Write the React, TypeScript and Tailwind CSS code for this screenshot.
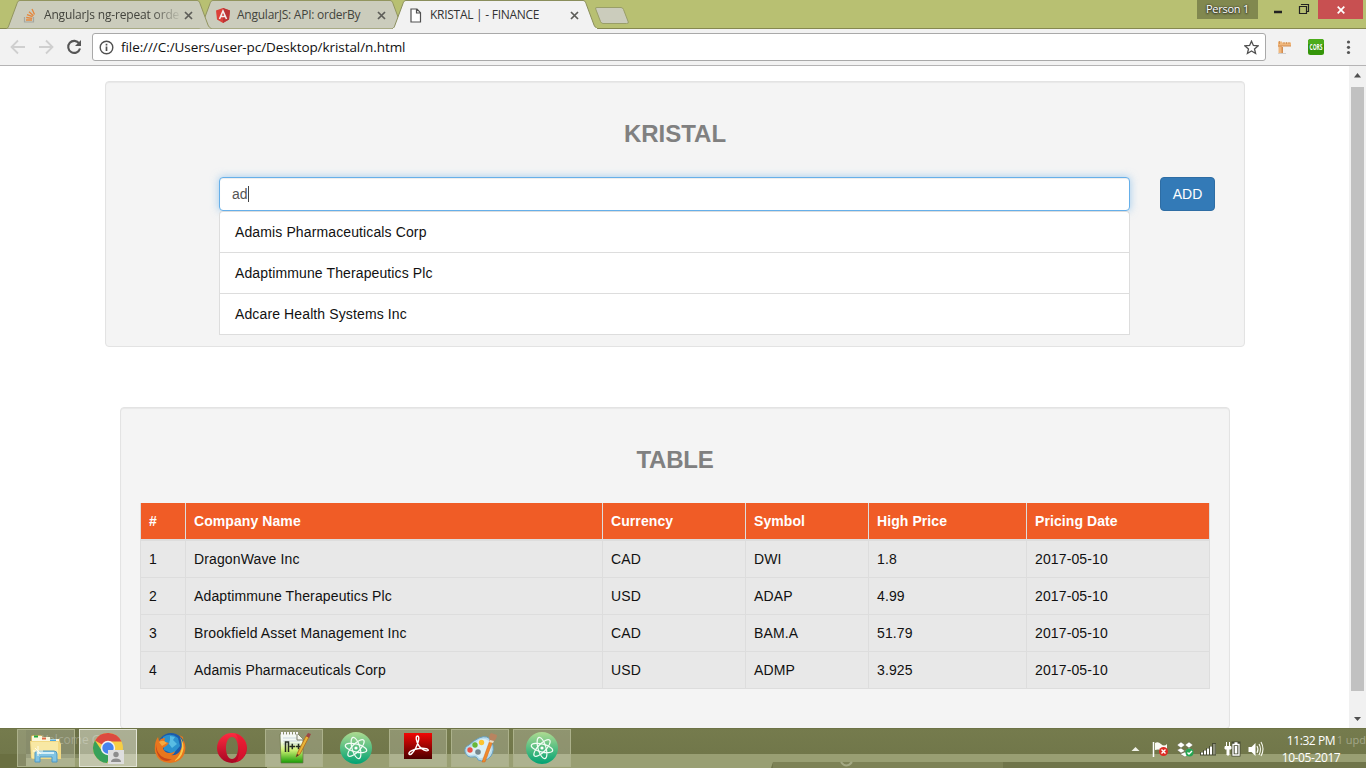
import type { ReactNode } from 'react';

const companies = ['Adamis Pharmaceuticals Corp', 'Adaptimmune Therapeutics Plc', 'Adcare Health Systems Inc'];

const headers = ['#', 'Company Name', 'Currency', 'Symbol', 'High Price', 'Pricing Date'];

const rows = [
  ['1', 'DragonWave Inc', 'CAD', 'DWI', '1.8', '2017-05-10'],
  ['2', 'Adaptimmune Therapeutics Plc', 'USD', 'ADAP', '4.99', '2017-05-10'],
  ['3', 'Brookfield Asset Management Inc', 'CAD', 'BAM.A', '51.79', '2017-05-10'],
  ['4', 'Adamis Pharmaceuticals Corp', 'USD', 'ADMP', '3.925', '2017-05-10'],
];

function Close() {
  return (
    <svg width="9" height="9" viewBox="0 0 9 9" className="shrink-0">
      <path d="M1 1l7 7M8 1L1 8" stroke="#5d5d58" strokeWidth="1.7" />
    </svg>
  );
}

function Tab({ active, icon, title, className, textClass }: { active?: boolean; icon: ReactNode; title: string; className: string; textClass: string }) {
  return (
    <div className={`relative flex h-[29px] w-[206px] shrink-0 items-center ${className}`}>
      <svg width="206" height="29" className="absolute inset-0">
        <path
          d="M0.5 28.5C2 28 2.5 26.500 3 25L11 3.500C11.600 1.500 12.500 0.500 14 0.500H191C192.500 0.500 193.400 1.500 194 3.500L202 25C202.500 26.500 204 28 205.500 28.5"
          fill={active ? '#f2f2f2' : '#cbccbc'}
          stroke={active ? '#8a8e5c' : '#92955f'}
        />
        {active && <path d="M1 28.500H205" stroke="#f2f2f2" />}
      </svg>
      <div className="relative flex w-full items-center pl-[17px] pt-px">
        <div className="w-[21px] shrink-0">{icon}</div>
        <div className={`w-[137px] whitespace-nowrap text-[12px] leading-4 ${textClass}`}>{title}</div>
        <div className="ml-[3px]">
          <Close />
        </div>
      </div>
    </div>
  );
}

function TabStrip() {
  return (
    <div className="flex h-[29px] border-b border-[#85884f] bg-[#b8c072]">
      <div className="flex w-[598px] shrink-0 pl-[6px]">
        <Tab
          className="z-10"
          textClass="text-[#43443d] tracking-[-0.17px] [mask-image:linear-gradient(to_right,black_108px,transparent_138px)]"
          title="AngularJs ng-repeat orde"
          icon={
            <svg width="14" height="15" viewBox="0 0 14 15">
              <path d="M1.500 9v5h9V9" fill="none" stroke="#a5a6a0" strokeWidth="1.200" />
              <path d="M3 12h6M3.200 9.500l6 .8M4 6.600l5.600 2M6 3.800l4.500 4M9 1l2.500 5.500" stroke="#e5863b" strokeWidth="1.300" />
            </svg>
          }
        />
        <Tab
          className="-ml-[13px]"
          textClass="text-[#43443d] tracking-[-0.24px]"
          title="AngularJS: API: orderBy"
          icon={
            <svg width="14" height="15" viewBox="0 0 14 15">
              <path d="M7 0l7 2.500-1 9L7 15l-6-3.500L0 2.500z" fill="#dc4038" />
              <path d="M7 0l7 2.500-1 9L7 15z" fill="#bb3436" />
              <path d="M3.500 11L7 3l3.500 8M4.800 8.500h4.400" fill="none" stroke="#f5eeee" strokeWidth="1.600" />
            </svg>
          }
        />
        <Tab
          active
          className="-ml-[13px] z-20"
          textClass="text-[#333] tracking-[-0.27px]"
          title="KRISTAL | - FINANCE"
          icon={
            <svg width="12" height="15" viewBox="0 0 12 15" className="ml-px">
              <path d="M1 1h6l3.500 3.700V14H1zM6.500 1v4h4" fill="#fff" stroke="#505050" strokeWidth="1.200" />
            </svg>
          }
        />
      </div>
      <svg width="36" height="28" className="-ml-[4px] shrink-0">
        <path d="M3 7.500Q1 7.500 1.700 9L6.500 21.500Q7.300 23.500 9 23.500H32.500Q35 23.500 34.300 22L29.500 9.500Q28.800 7.500 27 7.500Z" fill="#cbccbc" stroke="#999e68" />
      </svg>
      <div className="ml-auto mr-[3px] flex items-start">
        <div className="flex h-[19px] w-[61px] items-center justify-center bg-[#81884f] pb-px text-[11px] tracking-[-0.25px] text-white [text-shadow:0_0_2px_#222,0_1px_2px_#222]">
          Person 1
        </div>
        <svg width="60" height="19" fill="none">
          <path d="M16 12h8" stroke="#222" strokeWidth="2.500" />
          <path d="M41.500 6.500h7v7h-7zM43.500 5V4.500h7v7H49" stroke="#222" strokeWidth="1.200" />
        </svg>
        <div className="flex h-[19px] w-[45px] items-center justify-center bg-[#c85051]">
          <svg width="8" height="8" viewBox="0 0 8 8">
            <path d="M.7.7l6.600 6.600M7.300.7L.7 7.300" stroke="#fff" strokeWidth="1.700" />
          </svg>
        </div>
      </div>
    </div>
  );
}

function Toolbar() {
  return (
    <div className="flex h-[37px] items-start border-b border-[#b5b4b5] bg-[#f2f2f2] pt-[4px]">
      <svg width="92" height="28" fill="none" className="shrink-0">
        <path d="M25 14H12M18 7.500L11.500 14l6.500 6.500" stroke="#cfcfcf" strokeWidth="1.800" />
        <path d="M39 14h13M46 7.500l6.500 6.500-6.500 6.500" stroke="#cfcfcf" strokeWidth="1.800" />
        <path d="M79.200 10.500A6 6 0 1 0 80 15.500" stroke="#555" strokeWidth="2.100" />
        <path d="M81 7v6h-6z" fill="#555" />
      </svg>
      <div className="flex h-[28px] w-[1174px] items-center rounded-[3px] border border-[#a9a9a9] bg-white pl-[7px] pr-[6px]">
        <svg width="15" height="15" viewBox="0 0 15 15" fill="none" className="-translate-x-px">
          <circle cx="7.500" cy="7.500" r="6.300" stroke="#505050" strokeWidth="1.400" />
          <path d="M7.500 6.500v4.500M7.500 3.800v1.600" stroke="#505050" strokeWidth="1.700" />
        </svg>
        <span className="ml-[6px] text-[13.500px] leading-5 tracking-[-0.075px] text-[#111]">file:///C:/Users/user-pc/Desktop/kristal/n.html</span>
        <svg width="15" height="15" viewBox="0 0 15 15" className="ml-auto">
          <path d="M7.500 1.200l1.900 4.300 4.600.4-3.500 3 1.100 4.600-4.100-2.500-4.100 2.500 1.100-4.600-3.500-3 4.600-.4z" fill="none" stroke="#505050" strokeWidth="1.300" />
        </svg>
      </div>
      <svg width="100" height="28" className="shrink-0">
        <path d="M12 8.500h4v1h9v3.500h-9v7h-3.500v-6.500H12z" fill="#f0b77c" />
        <path d="M12 12.500h13v1H12zM15.500 13v7H17v-7z" fill="#d28c50" />
        <path d="M13.500 8v3M18 9v2M20.500 9v2M23 9v2" stroke="#c58448" strokeWidth=".7" />
        <path d="M12 20.500h8" stroke="#cfcfcf" />
        <rect x="42" y="6" width="16" height="16" rx="2.500" fill="#349509" />
        <path d="M42 11V8.500Q42 6 44.500 6H55.500Q58 6 58 8.500V11z" fill="#4cac1b" />
        <text x="43.500" y="17" fontSize="8" fontWeight="bold" fill="#fff" textLength="13" lengthAdjust="spacingAndGlyphs">CORS</text>
        <circle cx="82.500" cy="9" r="1.600" fill="#555" />
        <circle cx="82.500" cy="14.300" r="1.600" fill="#555" />
        <circle cx="82.500" cy="19.500" r="1.600" fill="#555" />
      </svg>
    </div>
  );
}

function Search() {
  return (
    <section className="h-[266px] w-[1140px] shrink-0 rounded-[4px] border border-[#e3e3e3] bg-[#f4f4f4] shadow-[inset_0_1px_1px_rgba(0,0,0,0.05)]">
      <h1 className="pt-[39px] text-center text-[24px] font-bold leading-[26px] text-[#808080]">KRISTAL</h1>
      <div className="mt-[30px] flex items-start pl-[113px]">
        <div className="w-[911px]">
          <div className="relative flex h-[34px] items-center rounded-[4px] border border-[#66afe9] bg-white px-[12px] text-[14px] text-[#555] shadow-[inset_0_1px_1px_rgba(0,0,0,0.075),0_0_8px_rgba(102,175,233,0.6)]">
            ad
            <span className="h-4 w-px bg-[#444]" />
          </div>
          <ul className="relative rounded-t-[4px] border-x border-t border-[#ddd] bg-white text-[14px] leading-5 tracking-[0.12px] text-[#111]">
            {companies.map((name) => (
              <li key={name} className="h-[41px] border-b border-[#ddd] px-[15px] pt-[10px]">
                {name}
              </li>
            ))}
          </ul>
        </div>
        <button className="ml-[30px] h-[34px] w-[55px] rounded-[4px] border border-[#2e6da4] bg-[#337ab7] text-[14px] text-white">ADD</button>
      </div>
    </section>
  );
}

function Prices() {
  return (
    <section className="mt-[60px] h-[322px] w-[1110px] shrink-0 rounded-[4px] border border-[#e3e3e3] bg-[#f4f4f4] px-[19px] shadow-[inset_0_1px_1px_rgba(0,0,0,0.05)]">
      <h2 className="pt-[39px] text-center text-[24px] font-bold leading-[26px] tracking-[-0.2px] text-[#808080]">TABLE</h2>
      <div className="mt-[30px] text-[14px] leading-5">
        <div className="grid h-[38px] grid-cols-[46px_417px_143px_123px_158px_183px] border-b-2 border-[#ddd] bg-[#f05c26] font-bold tracking-[0.08px] text-white">
          {headers.map((h) => (
            <div key={h} className="border-r border-[#ddd] pl-[8px] pt-[8px] first:border-l">
              {h}
            </div>
          ))}
        </div>
        {rows.map((row) => (
          <div key={row[0]} className="grid h-[37px] grid-cols-[46px_417px_143px_123px_158px_183px] border-b border-[#ddd] bg-[#e8e8e8] tracking-[0.13px] text-[#111]">
            {row.map((cell, i) => (
              <div key={headers[i]} className="border-r border-[#ddd] pl-[8px] pt-[8px] first:border-l">
                {cell}
              </div>
            ))}
          </div>
        ))}
      </div>
    </section>
  );
}

function Scrollbar() {
  return (
    <div className="flex w-[17px] shrink-0 flex-col items-center bg-[#f1f1f1]">
      <svg width="17" height="21">
        <path d="M5 11.500L8.500 7l3.500 4.500z" fill="#505050" />
      </svg>
      <div className="h-[604px] w-[13px] bg-[#c1c1c1]" />
      <svg width="17" height="17" className="mt-auto">
        <path d="M5 6h7L8.500 10z" fill="#505050" />
      </svg>
    </div>
  );
}

function Explorer() {
  return (
    <svg width="34" height="32" viewBox="0 0 34 32">
      <path d="M2 4l2-1h8l2 2 8 2h9l1 19H2z" fill="#d5b665" />
      <path d="M3 4h10v5H3zM11 5h10v5H11zM19 7h11v5H19z" fill="#faf7dd" />
      <path d="M5 3.500h4v2H5z" fill="#21a73d" />
      <path d="M13 5.500h4v2h-4z" fill="#df6946" />
      <path d="M21 7.500h6v2h-6z" fill="#4fa8df" />
      <path d="M1 9h29l2 3v15H4q-2 0-2-2z" fill="#f2d983" />
      <path d="M2 10h27v16H3z" fill="#f8e8a4" />
      <path d="M6 30V21q0-2 2-2h17q3 0 3 3v8h-5v-5H11v5z" fill="#82c4e3" stroke="#4f98c3" />
      <path d="M8 21h17" stroke="#d5f0f8" strokeWidth="2" />
      <path d="M9 14v10M4 19h10M6 16l6 6" stroke="#fffde9" strokeWidth="1" />
    </svg>
  );
}

function Chrome() {
  return (
    <svg width="34" height="34" viewBox="0 0 34 34" className="translate-x-px">
      <circle cx="16" cy="17" r="15" fill="#f6ce45" />
      <path d="M16 17L3 9.500A15 15 0 0 1 29.500 10.500H16z" fill="#dc4b40" />
      <path d="M3 9.500A15 15 0 0 0 15 32l5.500-11L10 20z" fill="#37a15a" />
      <circle cx="16" cy="17" r="7.200" fill="#f3f3f3" />
      <circle cx="16" cy="17" r="5.700" fill="#4683ed" />
      <rect x="16" y="19" width="16" height="14" fill="#dedede" />
      <circle cx="24" cy="23.500" r="2.700" fill="#8d8d8d" />
      <path d="M19 31q0-3.500 5-3.500t5 3.500z" fill="#8d8d8d" />
    </svg>
  );
}

function Firefox() {
  return (
    <svg width="32" height="32" viewBox="0 0 32 32">
      <circle cx="17" cy="14" r="13" fill="#1b5bab" />
      <path d="M9 5q8-5 15 1l2 8-7 8-9-4z" fill="#2b91cd" />
      <path d="M16 4l5 1-2 3 4 4-5 4-3-4 1-4z" fill="#58bce3" />
      <path d="M25 3q8 7 6 16-2 11-15 12Q4 31 1 20 0 10 4 5l1 4q2-3 6-3-1 2 0 4l4 1-3 3-3 2q1 5 7 5 3 0 5-2-1 4-4 4 7 1 10-6 3-5 2-12z" fill="#e8761e" />
      <path d="M26 5q5 7 3 14-2 8-9 10 5-4 7-10 2-7-1-14z" fill="#fac748" />
      <path d="M2 12q0 7 5 12 5 4 11 3-5 4-11 0-6-6-5-15z" fill="#c94718" />
      <path d="M5 10q3-2 5-1l3 2-5 3z" fill="#f7a940" />
    </svg>
  );
}

function Opera() {
  return (
    <svg width="32" height="32" viewBox="0 0 32 32">
      <defs>
        <linearGradient id="opera" x2="0" y2="1">
          <stop stopColor="#ff2b40" />
          <stop offset="1" stopColor="#a60722" />
        </linearGradient>
      </defs>
      <path fillRule="evenodd" d="M16 1a15 15 0 1 0 0 30 15 15 0 1 0 0-30zm0 4c3.500 0 6 4.500 6 11s-2.500 11-6 11-6-4.500-6-11S12.500 5 16 5z" fill="url(#opera)" />
      <path d="M19 1.500c15 3 15 26 0 29 6-4 6-24 0-29z" fill="#e6182e" opacity=".6" />
    </svg>
  );
}

function Notepad() {
  return (
    <svg width="34" height="34" viewBox="0 0 34 34">
      <defs>
        <linearGradient id="notepad" x2="0" y2="1">
          <stop offset=".25" stopColor="#f4f9f3" />
          <stop offset=".55" stopColor="#cff174" />
          <stop offset="1" stopColor="#179b05" />
        </linearGradient>
      </defs>
      <path d="M3 3h18l5 5v24H4z" fill="url(#notepad)" stroke="#697348" strokeWidth=".7" />
      <path d="M4 2.500h18" stroke="#f4f4f4" strokeWidth="3" strokeDasharray="2 1" />
      <path d="M6 7h15M6 10h17M6 13h17" stroke="#b8c8d2" strokeWidth=".7" />
      <path d="M20 3v6h6" fill="#f6f6ed" stroke="#797c6b" />
      <path d="M8.500 21V11h3v10M12.500 15.500h5.500M15.300 12.800v5.500M18.700 15.500h5.500M21.500 12.800v5.500" fill="none" stroke="#252b22" strokeWidth="1.500" />
      <path d="M19 26l2-5L29 5l3 1-9 17z" fill="#e9b538" stroke="#b57523" />
      <path d="M29 5l2-3 3 1-2 4z" fill="#9d4745" />
      <path d="M19 26l1-3 2 1z" fill="#463927" />
    </svg>
  );
}

function Atom() {
  return (
    <svg width="32" height="32" viewBox="0 0 32 32">
      <defs>
        <linearGradient id="atom" x2="0" y2="1">
          <stop stopColor="#aedb91" />
          <stop offset="1" stopColor="#00a273" />
        </linearGradient>
      </defs>
      <circle cx="16" cy="16" r="16" fill="url(#atom)" />
      <g fill="none" stroke="#f2fcf5" strokeWidth="1.200">
        <ellipse cx="16" cy="16" rx="11" ry="4" transform="rotate(14 16 16)" />
        <ellipse cx="16" cy="16" rx="11" ry="4" transform="rotate(74 16 16)" />
        <ellipse cx="16" cy="16" rx="11" ry="4" transform="rotate(134 16 16)" />
      </g>
      <circle cx="16" cy="16" r="1.600" fill="#fff" />
    </svg>
  );
}

function Acrobat() {
  return (
    <svg width="28" height="32" viewBox="0 0 28 32" className="-translate-y-px">
      <defs>
        <linearGradient id="acrobat" x2="0" y2="1">
          <stop stopColor="#f10804" />
          <stop offset="1" stopColor="#4d0000" />
        </linearGradient>
      </defs>
      <rect y="2" width="28" height="26" fill="url(#acrobat)" />
      <path d="M13.500 5c-2.500 0-1 6 1.500 10 3 4 7.500 5.500 9 4.500S21 16.500 15 17.500c-5 .5-11 3.500-10 5.500s4.500-1.500 7-6.500 4-11.500 1.500-11.500z" fill="none" stroke="#fff" strokeWidth="1.400" />
    </svg>
  );
}

function Paint() {
  return (
    <svg width="34" height="34" viewBox="0 0 34 34">
      <path d="M16 7q9-4 13 4 3 8-1 14-6 7-13 4-1-4-5-3-6 1-8-5-1-5 4-7 4-4 10-7z" fill="#b8dced" stroke="#679fbe" />
      <path d="M16 9q8-3 12 4 1 8-3 11-4 4-9 3-2-5-8-3-4 0-4-4 5-5 12-11z" fill="#dceff5" />
      <circle cx="7" cy="19" r="2.700" fill="#ed5346" />
      <circle cx="12" cy="14" r="2.700" fill="#69b739" />
      <circle cx="18.500" cy="11.500" r="2.700" fill="#fcc42f" />
      <circle cx="15" cy="21" r="2.800" fill="#75878e" />
      <path d="M19 31L27 9l3 1-8 21z" fill="#f18a2b" stroke="#ca641f" strokeWidth=".5" />
      <path d="M27 10q-2-5 1-8l6 2q0 4-4 7z" fill="#b88460" />
      <path d="M27 9l4 1-1 2-4-1z" fill="#e8dcc7" />
    </svg>
  );
}

function TaskButton({ children, kind }: { children: ReactNode; kind?: 'open' | 'active' }) {
  const frame =
    kind === 'active'
      ? 'border-[#e2e4d5] bg-white/40'
      : kind === 'open'
        ? 'border-[#acb18b] bg-white/20'
        : 'border-transparent';
  return (
    <div className="w-[62px] shrink-0">
      <div className={`flex h-[38px] w-[58px] items-center justify-center border ${frame}`}>{children}</div>
    </div>
  );
}

function Tray() {
  return (
    <svg width="140" height="24" viewBox="0 0 140 24">
      <path d="M5.500 14l4-4 4 4z" fill="#f0f2e8" />
      <path d="M27.500 5v15" stroke="#fff" strokeWidth="1.500" />
      <path d="M29 6q3-2 6 1t6 0v7q-3 2-6-1-3-1-6 0z" fill="#fafaf4" />
      <circle cx="37.500" cy="14.500" r="4.500" fill="#dd2c24" />
      <path d="M35.500 12.500l4 4m0-4l-4 4" stroke="#fff" strokeWidth="1.400" />
      <path d="M51 8l4-3 4 3-4 3zM59 8l4-3 4 3-4 3zM51 13l4-2 4 3-4 2zM59 14l4-3 4 2-4 3zM54 17l5-2 4 2-4 3z" fill="#fff" stroke="#4c5138" strokeWidth=".4" />
      <circle cx="63.500" cy="15.500" r="4" fill="#25a653" />
      <path d="M61.500 15.500l1.500 1.500 3-3" fill="none" stroke="#fff" strokeWidth="1.400" />
      <path d="M74 15h3v-2h3v-2h3V9h3V6h4v12.500H74z" fill="#484c35" />
      <path d="M75 15.500h2v2h-2zM78 13.500h2v4h-2zM81 11.500h2v6h-2zM84 9.500h2v8h-2z" fill="#fff" />
      <path d="M87 7h2.500v10.500H87z" fill="#8d907c" />
      <rect x="105.500" y="4.500" width="9" height="15" fill="#484c35" />
      <path d="M100.500 5v4M103.500 5v4M99 9.500h6v2.500h-2v6h-2v-6h-2z" fill="#fff" stroke="#fff" strokeWidth="1" />
      <path d="M107 7.500h6v10.500h-6zM108.500 6h3" fill="none" stroke="#fff" strokeWidth="1.300" />
      <path d="M108.700 9h2.600v7.500h-2.600z" fill="#fff" />
      <path d="M122.500 10h3l4-4v13l-4-4h-3z" fill="#fff" />
      <path d="M131 9q2 3.500 0 7m2-9q3 5 0 11m2-13q4 7 0 14" fill="none" stroke="#f8f9ef" strokeWidth="1.100" />
    </svg>
  );
}

function Taskbar() {
  return (
    <footer className="relative h-[40px] bg-[#74794b] bg-[linear-gradient(to_bottom,#666b40_0px,#757b4d_1px,#71774a_26px,#999f73_26px,#999f73_34px,transparent_34px)]">
      <svg width="1366" height="40" className="absolute inset-0">
        <rect x="0" y="26" width="26" height="14" fill="#6a6f41" />
        <rect x="26" y="34" width="747" height="6" fill="#999f73" />
        <rect x="17" y="39" width="250" height="1" fill="#5c6237" />
        <path d="M773 34h593v6H771z" fill="#70754a" />
        <rect x="773" y="34" width="230" height="6" fill="#7d8256" />
        <path d="M841 34q5 7 11 0" fill="none" stroke="#a4a984" strokeWidth="2" />
        <rect x="26" y="1" width="54" height="29" fill="#5b603f" opacity=".35" />
      </svg>
      <div className="absolute left-[37px] top-[4px] text-[12px] leading-4 text-white/25">Welcome G</div>
      <div className="absolute right-0 top-[4px] flex w-[30px] justify-end whitespace-nowrap text-[11px] leading-4 text-white/35">1 upd</div>
      <div className="relative flex h-full items-start">
        <div className="flex pl-[17px] pt-px">
          <TaskButton kind="open"><Explorer /></TaskButton>
          <TaskButton kind="active"><Chrome /></TaskButton>
          <TaskButton><Firefox /></TaskButton>
          <TaskButton><Opera /></TaskButton>
          <TaskButton kind="open"><Notepad /></TaskButton>
          <TaskButton><Atom /></TaskButton>
          <TaskButton kind="open"><Acrobat /></TaskButton>
          <TaskButton kind="open"><Paint /></TaskButton>
          <TaskButton kind="open"><Atom /></TaskButton>
        </div>
        <div className="ml-auto mr-[20px] flex">
          <div className="pt-[9px]"><Tray /></div>
          <div className="ml-[10px] w-[70px] pt-[4px] text-center text-[12px] leading-[17px] tracking-[-0.4px] text-white">
            <div>11:32 PM</div>
            <div>10-05-2017</div>
          </div>
        </div>
      </div>
    </footer>
  );
}

export default function App() {
  return (
    <div className="flex h-[768px] w-[1366px] flex-col overflow-hidden bg-white font-['Open_Sans','Noto_Sans',sans-serif]">
      <TabStrip />
      <Toolbar />
      <main className="flex h-[662px] overflow-hidden">
        <div className="flex w-[1349px] flex-col items-center pl-px pt-[15px] font-['Liberation_Sans',Arial,sans-serif]">
          <Search />
          <Prices />
        </div>
        <Scrollbar />
      </main>
      <Taskbar />
    </div>
  );
}
